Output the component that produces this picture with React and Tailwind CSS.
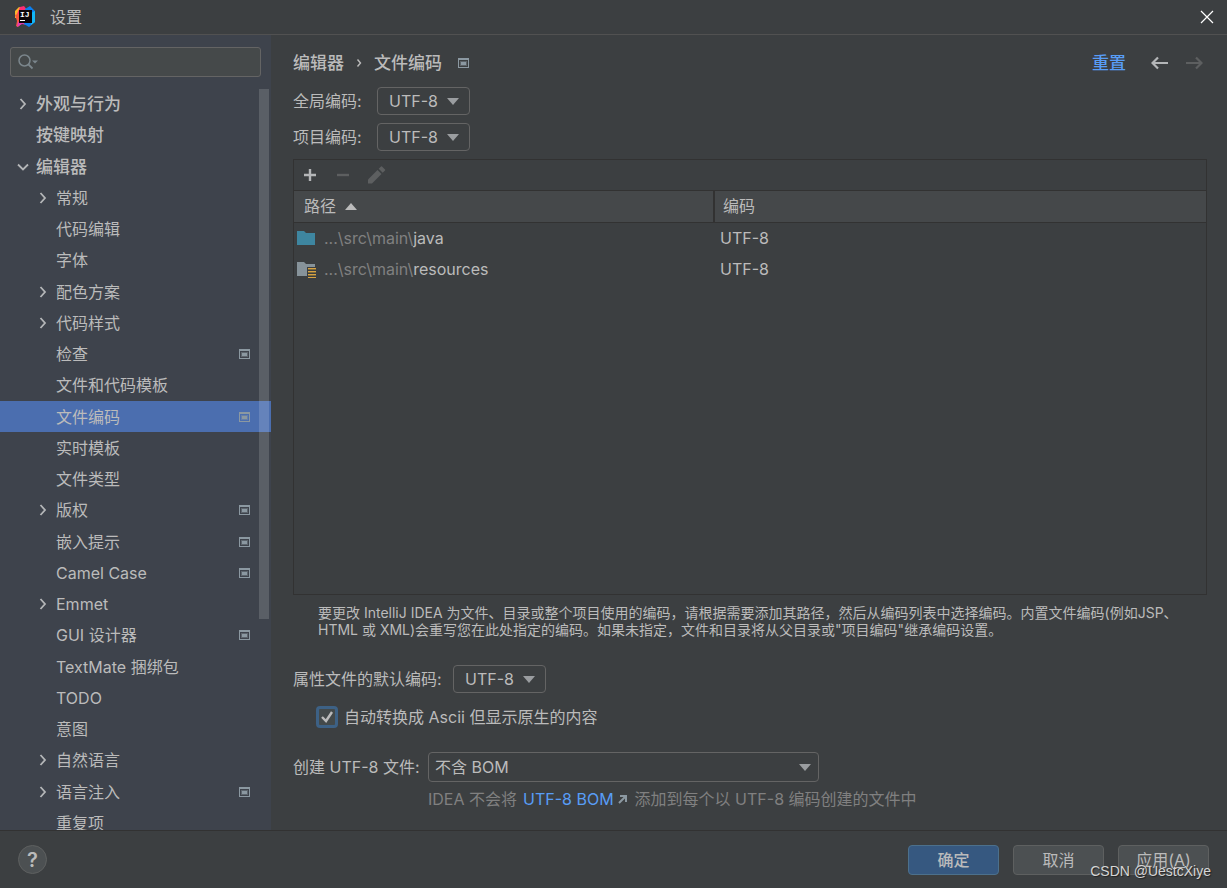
import React from 'react'
import clsx from 'clsx'

const treeItems = [
    { label: '外观与行为', level: 0, arrow: 'right' },
    { label: '按键映射', level: 0 },
    { label: '编辑器', level: 0, arrow: 'down' },
    { label: '常规', level: 1, arrow: 'right' },
    { label: '代码编辑', level: 1 },
    { label: '字体', level: 1 },
    { label: '配色方案', level: 1, arrow: 'right' },
    { label: '代码样式', level: 1, arrow: 'right' },
    { label: '检查', level: 1, project: true },
    { label: '文件和代码模板', level: 1 },
    { label: '文件编码', level: 1, project: true, selected: true },
    { label: '实时模板', level: 1 },
    { label: '文件类型', level: 1 },
    { label: '版权', level: 1, arrow: 'right', project: true },
    { label: '嵌入提示', level: 1, project: true },
    { label: 'Camel Case', level: 1, project: true },
    { label: 'Emmet', level: 1, arrow: 'right' },
    { label: 'GUI 设计器', level: 1, project: true },
    { label: 'TextMate 捆绑包', level: 1 },
    { label: 'TODO', level: 1 },
    { label: '意图', level: 1 },
    { label: '自然语言', level: 1, arrow: 'right' },
    { label: '语言注入', level: 1, arrow: 'right', project: true },
    { label: '重复项', level: 1 },
]

const paths = [
    { prefix: '...\\src\\main\\', name: 'java', encoding: 'UTF-8' },
    { prefix: '...\\src\\main\\', name: 'resources', encoding: 'UTF-8', resources: true },
]

const Logo = () => (
    <svg width="22" height="22" viewBox="0 0 22 22" aria-hidden="true">
        <path d="M1 5 L5 1 L11 3 L8 12 L1 12 Z" fill="#fdb52a" />
        <path d="M6 1 L10 0 L13 4 L8 10 L3 8 Z" fill="#fe2d75" />
        <path d="M1 9 L6 7 L9 16 L4 21 L2 20 L3 15 Z" fill="#f9583c" />
        <path d="M4 16 L10 14 L13 19 L8 18 L3 21 Z" fill="#e03bb6" />
        <path d="M11 3 L16 0 L21 5 L21 16 L15 21 L10 18 L12 10 Z" fill="#0a7ef0" />
        <path d="M17 7 L21 5 L21 16 L17 19 Z" fill="#12b6f5" />
        <rect x="5" y="4" width="13" height="13" fill="#0c0508" />
        <text x="6" y="11" fontSize="8" fontWeight="700" fontFamily="Liberation Mono, monospace" fill="#fff">IJ</text>
        <rect x="6" y="14" width="5" height="1" fill="#fff" />
    </svg>
)

const ProjectIcon = ({ className }) => (
    <svg width="11" height="10" viewBox="0 0 11 10" className={className} aria-hidden="true">
        <path fillRule="evenodd" d="M0 0H11V10H0Z M1 2V9H10V2Z" fill="#8b98a1" />
        <rect x="2" y="3" width="7" height="5" fill="#8b98a1" fillOpacity="0.4" />
        <rect x="3" y="4" width="5" height="3" fill="#8b98a1" />
    </svg>
)

const TreeArrow = ({ direction }) => (
    <svg width="14" height="14" viewBox="0 0 14 14" fill="none" stroke="#b4b6b8" strokeWidth="1.8" aria-hidden="true">
        {direction === 'right' && <path d="M4.500 2 L9 7 L4.500 12" />}
        {direction === 'down' && <path d="M2 4.500 L7 9.500 L12 4.500" />}
    </svg>
)

const TreeItem = ({ item }) => (
    <li className="h-[31px] [&:nth-child(4n+2)]:h-8">
        <button
            type="button"
            className={clsx(
                'flex h-full w-full items-center pr-[21px] text-left whitespace-nowrap',
                item.selected && 'bg-[#4b6eaf]',
                item.level === 0 ? 'pl-4 text-[17px] font-medium' : 'pl-9'
            )}
        >
            <span className="w-5 shrink-0">
                <TreeArrow direction={item.arrow} />
            </span>
            <span className="flex-1">{item.label}</span>
            {item.project && <ProjectIcon />}
        </button>
    </li>
)

const Sidebar = () => (
    <aside className="flex w-[271px] shrink-0 flex-col bg-[#3e434c]">
        <div className="px-[10px] pt-3 pb-[11px]">
            <div className="flex h-[30px] items-center rounded-[3px] border border-[#646464] bg-[#45494a] pl-[7px]">
                <svg width="21" height="16" viewBox="0 0 21 16" fill="none" aria-hidden="true">
                    <circle cx="6.500" cy="6.500" r="5.500" stroke="#7b868c" strokeWidth="1.500" />
                    <path d="M10.500 10.500 L14.500 14.500" stroke="#7b868c" strokeWidth="1.800" />
                    <path d="M14 6.500 H20 L17 9.500 Z" fill="#7b868c" />
                </svg>
                <input type="text" aria-label="搜索" className="min-w-0 flex-1 bg-transparent outline-none" />
            </div>
        </div>
        <div className="relative min-h-0 flex-1 overflow-hidden">
            <ul>
                {treeItems.map((item) => <TreeItem key={item.label} item={item} />)}
            </ul>
            <div className="absolute top-px right-[2px] h-[530px] w-[10px] bg-white/15" />
        </div>
    </aside>
)

const Triangle = ({ className }) => (
    <svg width="12" height="7" viewBox="0 0 12 7" className={className} aria-hidden="true">
        <path d="M0 0 H12 L6 7 Z" fill="currentColor" />
    </svg>
)

const Select = ({ id, options, className, wide }) => (
    <div className={clsx('grid items-center', className)}>
        <select
            id={id}
            className={clsx(
                'col-start-1 row-start-1 w-full appearance-none rounded-[4px] border border-[#646464] bg-transparent leading-6 outline-none',
                wide ? 'h-[30px] pl-[6px]' : 'h-7 pl-[11px]'
            )}
        >
            {options.map((option) => <option key={option}>{option}</option>)}
        </select>
        <Triangle className={clsx('pointer-events-none col-start-1 row-start-1 justify-self-end text-[#9a9da0]', wide ? 'mr-2' : 'mr-[11px]')} />
    </div>
)

const FolderIcon = ({ resources }) => (
    <svg width="20" height="18" viewBox="0 0 20 18" className="shrink-0" aria-hidden="true">
        <path d="M0 2 H7 L9 4 H18 V16 H0 Z" fill={resources ? '#87939a' : '#3e86a0'} />
        {resources && (
            <>
                <rect x="10" y="7" width="10" height="11" fill="#3c3f41" />
                <path d="M11 8.500H19M11 11.500H19M11 14.500H19M11 17.500H19" stroke="#d9a343" />
                <path d="M11 9.500H19M11 12.500H19M11 15.500H19" stroke="#7d6a3a" />
            </>
        )}
    </svg>
)

const PathsTable = () => (
    <section className="mt-2 flex min-h-0 flex-1 flex-col border border-[#323232]">
        <div className="flex h-[31px] items-center gap-4 border-b border-[#323232] pl-2">
            <button type="button" aria-label="添加">
                <svg width="16" height="16" viewBox="0 0 16 16" aria-hidden="true">
                    <path d="M8 2V14M2 8H14" stroke="#b4b6b8" strokeWidth="2.400" />
                </svg>
            </button>
            <button type="button" aria-label="移除" disabled>
                <svg width="18" height="16" viewBox="0 0 18 16" aria-hidden="true">
                    <path d="M3 8H15" stroke="#5d5f60" strokeWidth="2.400" />
                </svg>
            </button>
            <button type="button" aria-label="编辑" disabled>
                <svg width="18" height="18" viewBox="0 0 18 18" fill="#5d5f60" aria-hidden="true">
                    <path d="M0 13.500 L9.500 4 L13.500 8 L4 17.500 H0 Z" />
                    <path d="M10.700 2.800 L13 .5 Q13.500 0 14 .5 L17 3.500 Q17.500 4 17 4.500 L14.700 6.800 Z" />
                </svg>
            </button>
        </div>
        <table className="w-full table-fixed border-collapse text-left">
            <colgroup>
                <col className="w-[420px]" />
                <col />
            </colgroup>
            <thead>
                <tr className="h-[31px] border-b border-[#323232] bg-[#45484a]">
                    <th className="border-r-2 border-[#323232] p-0 pl-[10px] font-normal">
                        <span className="flex items-center gap-[9px]">
                            路径
                            <Triangle className="rotate-180" />
                        </span>
                    </th>
                    <th className="p-0 pl-2 font-normal">编码</th>
                </tr>
            </thead>
            <tbody>
                {paths.map((path) => (
                    <tr key={path.name} className="h-[31px]">
                        <td className="p-0 pl-[3px]">
                            <span className="flex items-center gap-[7px]">
                                <FolderIcon resources={path.resources} />
                                <span><span className="text-[#808080]">{path.prefix}</span>{path.name}</span>
                            </span>
                        </td>
                        <td className="p-0 pl-[6px]">{path.encoding}</td>
                    </tr>
                ))}
            </tbody>
        </table>
    </section>
)

const Content = () => (
    <main className="flex min-w-0 flex-1 flex-col pt-4 pr-5 pb-[19px] pl-[22px]">
        <header className="flex h-6 items-center text-[17px] font-medium">
            <span>编辑器</span>
            <svg width="6" height="10" viewBox="0 0 6 10" fill="none" className="mx-3" aria-hidden="true">
                <path d="M1.500 1.500 L4.500 5 L1.500 8.500" stroke="#bbb" strokeWidth="1.400" />
            </svg>
            <span>文件编码</span>
            <ProjectIcon className="ml-4" />
            <a href="#" className="ml-auto text-[#589df6]">重置</a>
            <button type="button" aria-label="后退" className="ml-[25px]">
                <svg width="18" height="14" viewBox="0 0 18 14" fill="none" stroke="#b4b6b8" strokeWidth="2.200" aria-hidden="true">
                    <path d="M17 7 H2 M7 1.500 L1.500 7 L7 12.500" />
                </svg>
            </button>
            <button type="button" aria-label="前进" disabled className="mr-1 ml-4">
                <svg width="18" height="14" viewBox="0 0 18 14" fill="none" stroke="#5d5f60" strokeWidth="2.200" aria-hidden="true">
                    <path d="M1 7 H16 M11 1.500 L16.500 7 L11 12.500" />
                </svg>
            </button>
        </header>

        <div className="mt-3 flex items-center">
            <label htmlFor="global" className="w-[84px]">全局编码:</label>
            <Select id="global" options={['UTF-8']} className="w-[93px]" />
        </div>
        <div className="mt-2 flex items-center">
            <label htmlFor="project" className="w-[84px]">项目编码:</label>
            <Select id="project" options={['UTF-8']} className="w-[93px]" />
        </div>

        <PathsTable />

        <p className="mt-[9px] pl-[25px] text-sm leading-[17px]">
            要更改 IntelliJ IDEA 为文件、目录或整个项目使用的编码，请根据需要添加其路径，然后从编码列表中选择编码。内置文件编码(例如JSP、<br />
            HTML 或 XML)会重写您在此处指定的编码。如果未指定，文件和目录将从父目录或"项目编码"继承编码设置。
        </p>

        <div className="mt-[27px] flex items-center">
            <label htmlFor="properties" className="w-40">属性文件的默认编码:</label>
            <Select id="properties" options={['UTF-8']} className="w-[93px]" />
        </div>
        <div className="mt-3 flex items-center pl-[23px]">
            <span className="grid items-center justify-items-center">
                <input
                    id="ascii"
                    type="checkbox"
                    defaultChecked
                    className="col-start-1 row-start-1 size-[22px] appearance-none rounded-[4px] border-3 border-[#3d6185] bg-[#43494a] outline-none"
                />
                <svg width="14" height="14" viewBox="0 0 14 14" fill="none" className="pointer-events-none col-start-1 row-start-1" aria-hidden="true">
                    <path d="M2 7 L6 11 L12 2" stroke="#bbb" strokeWidth="2.400" />
                </svg>
            </span>
            <label htmlFor="ascii" className="ml-[6px]">自动转换成 Ascii 但显示原生的内容</label>
        </div>

        <div className="mt-[23px] flex items-center">
            <label htmlFor="bom" className="w-[135px]">创建 UTF-8 文件:</label>
            <Select id="bom" options={['不含 BOM', '含 BOM']} className="w-[391px]" wide />
        </div>
        <p className="mt-[5px] flex items-center pl-[135px] text-[#808080]">
            IDEA 不会将
            <a href="#" className="ml-[6px] flex items-center gap-1 text-[#589df6]">
                UTF-8 BOM
                <svg width="9" height="9" viewBox="0 0 9 9" aria-hidden="true">
                    <path d="M2 1 H8 V7 M8 1 L1 8" stroke="#8b98a1" strokeWidth="2" fill="none" />
                </svg>
            </a>
            <span className="ml-2">添加到每个以 UTF-8 编码创建的文件中</span>
        </p>
    </main>
)

const Footer = () => (
    <footer className="relative flex h-[58px] shrink-0 items-center gap-[14px] border-t border-[#323232] pr-[18px] pl-[18px]">
        <button type="button" aria-label="帮助" className="mr-auto size-[29px] rounded-full border border-[#5e6060] bg-[#4c5052] text-xl leading-6 font-semibold">?</button>
        <button type="button" className="h-[30px] w-[91px] rounded-[4px] border border-[#4c708c] bg-[#365880] font-medium">确定</button>
        <button type="button" className="h-[30px] w-[91px] rounded-[4px] border border-[#5e6060] bg-[#4c5052]">取消</button>
        <button type="button" className="h-[30px] w-[91px] rounded-[4px] border border-[#5e6060] bg-[#4c5052]">应用(<u>A</u>)</button>
        <span className="absolute right-4 bottom-[5px] font-['Liberation_Sans',sans-serif] text-sm leading-6 text-[#d5d5d5] [text-shadow:1px_1px_1px_#222]">CSDN @UestcXiye</span>
    </footer>
)

export default function App() {
    return (
        <div className="flex h-screen flex-col overflow-hidden bg-[#3c3f41] font-['Inter','Noto_Sans_CJK_SC',sans-serif] text-base leading-6 text-[#bbbbbb]">
            <div className="flex h-[35px] shrink-0 items-center border-b border-[#515151] pr-[13px] pl-[14px]">
                <Logo />
                <h1 className="ml-[14px]">设置</h1>
                <button type="button" aria-label="关闭" className="ml-auto">
                    <svg width="14" height="14" viewBox="0 0 14 14" aria-hidden="true">
                        <path d="M1 1 L13 13 M13 1 L1 13" stroke="#fff" strokeWidth="1.200" />
                    </svg>
                </button>
            </div>
            <div className="flex min-h-0 flex-1">
                <Sidebar />
                <Content />
            </div>
            <Footer />
        </div>
    )
}
